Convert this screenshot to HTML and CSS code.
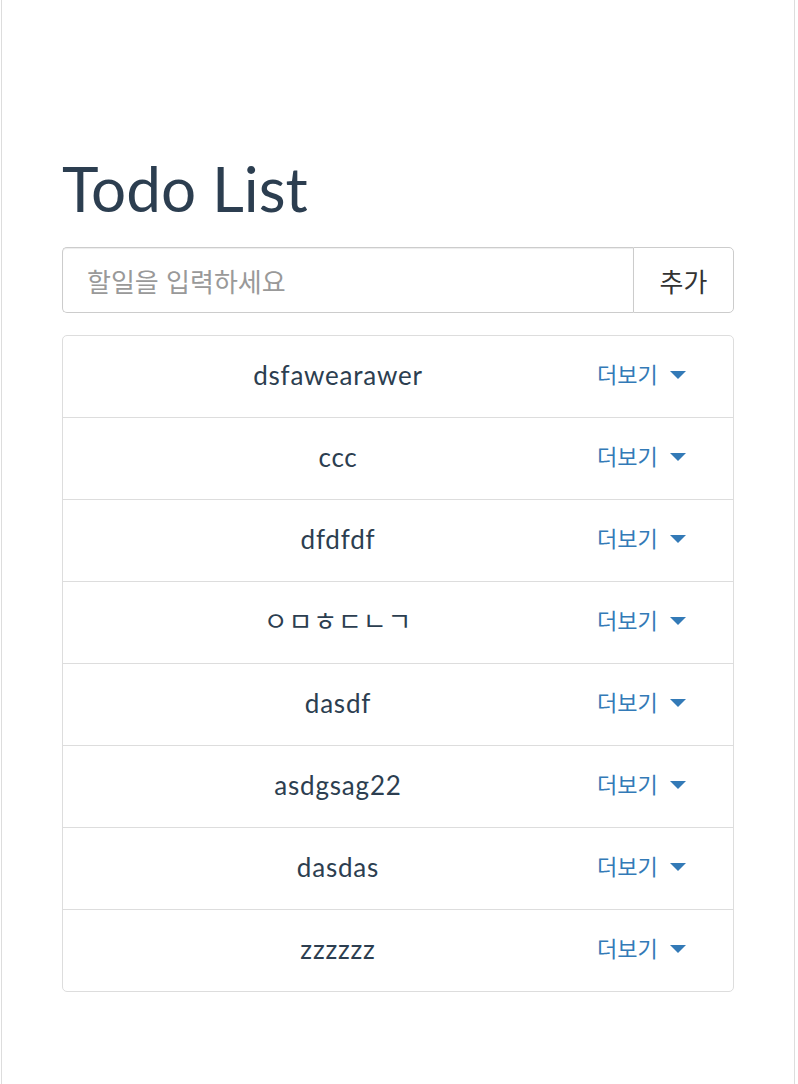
FILE: index.html
```html
<!DOCTYPE html>
<html lang="ko">
<head>
<meta charset="utf-8">
<title>Todo List</title>
<link rel="stylesheet" href="styles.css">
</head>
<body>
<div class="page">
  <h1 class="title">Todo List</h1>
  <form class="input-group">
    <input class="todo-input" type="text" placeholder="할일을 입력하세요">
    <button class="add-btn" type="button">추가</button>
  </form>
  <ul class="todo-list">
    <li class="todo-item"><span class="todo-text">dsfawearawer</span><a class="more">더보기<span class="caret"></span></a></li>
    <li class="todo-item"><span class="todo-text">ccc</span><a class="more">더보기<span class="caret"></span></a></li>
    <li class="todo-item"><span class="todo-text">dfdfdf</span><a class="more">더보기<span class="caret"></span></a></li>
    <li class="todo-item"><span class="todo-text">ㅇㅁㅎㄷㄴㄱ</span><a class="more">더보기<span class="caret"></span></a></li>
    <li class="todo-item"><span class="todo-text">dasdf</span><a class="more">더보기<span class="caret"></span></a></li>
    <li class="todo-item"><span class="todo-text">asdgsag22</span><a class="more">더보기<span class="caret"></span></a></li>
    <li class="todo-item"><span class="todo-text">dasdas</span><a class="more">더보기<span class="caret"></span></a></li>
    <li class="todo-item"><span class="todo-text">zzzzzz</span><a class="more">더보기<span class="caret"></span></a></li>
  </ul>
</div>
</body>
</html>
```

FILE: styles.css
```css
html, body {
  margin: 0;
  padding: 0;
  background: #fff;
}

body {
  font-family: Lato, "Noto Sans CJK KR", sans-serif;
  color: #2c3e50;
}

.page {
  box-sizing: border-box;
  margin-left: 1px;
  width: 794px;
  min-height: 100vh;
  border-left: 1px solid #ddd;
  border-right: 1px solid #ddd;
  padding: 155px 60px 0;
}

.title {
  font-size: 62px;
  font-weight: 400;
  line-height: 66px;
  margin: 0 0 26px;
  color: #2c3e50;
}

.input-group {
  display: flex;
  height: 66px;
  margin: 0;
}

.todo-input {
  flex: 1;
  min-width: 0;
  box-sizing: border-box;
  height: 66px;
  border: 1px solid #ccc;
  border-right: none;
  border-radius: 5px 0 0 5px;
  box-shadow: inset 0 1px 1px rgba(0, 0, 0, 0.075);
  padding: 0 24px;
  font-family: "Noto Sans CJK KR", sans-serif;
  font-size: 26px;
  color: #555;
  outline: none;
  background: #fff;
}

.todo-input::placeholder {
  color: #999;
}

.add-btn {
  box-sizing: border-box;
  width: 101px;
  height: 66px;
  border: 1px solid #ccc;
  border-radius: 0 5px 5px 0;
  background: #fff;
  font-family: "Noto Sans CJK KR", sans-serif;
  font-size: 26px;
  color: #333;
  padding: 0;
}

.todo-list {
  list-style: none;
  margin: 22px 0 0;
  padding: 0;
  border: 1px solid #ddd;
  border-radius: 5px;
}

.todo-item {
  display: flex;
  align-items: center;
  min-height: 81px;
  border-bottom: 1px solid #ddd;
}

.todo-item:last-child {
  border-bottom: none;
}

.todo-text {
  flex: 1;
  padding-left: 16px;
  margin-bottom: 4px;
  text-align: center;
  font-size: 26px;
  line-height: 30px;
  letter-spacing: 0.8px;
  color: #2c3e50;
}

.more {
  box-sizing: border-box;
  width: 136px;
  padding-right: 48px;
  display: flex;
  align-items: center;
  font-family: "Noto Sans CJK KR", sans-serif;
  font-size: 22px;
  line-height: 28px;
  color: #337ab7;
  white-space: nowrap;
  margin-bottom: 8px;
}

.caret {
  width: 0;
  height: 0;
  margin-left: 12px;
  margin-top: 4px;
  border-top: 8px solid #337ab7;
  border-left: 8px solid transparent;
  border-right: 8px solid transparent;
}
```
